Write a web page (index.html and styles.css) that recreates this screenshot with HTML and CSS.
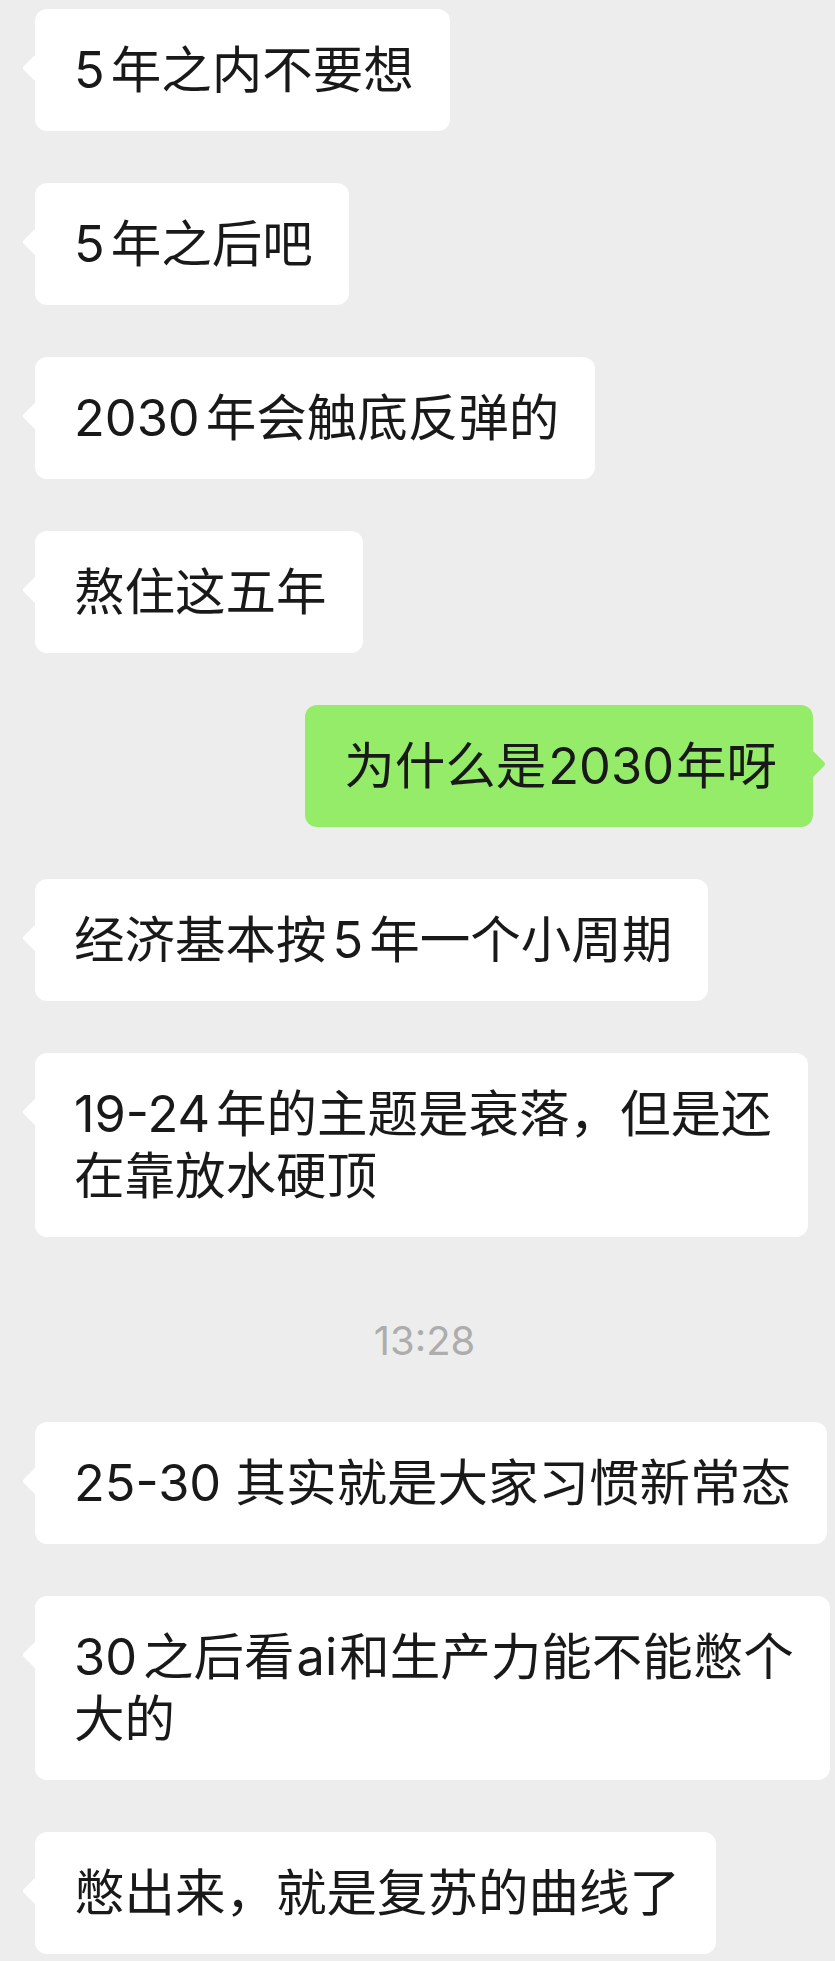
FILE: index.html
```html
<!DOCTYPE html>
<html lang="zh-CN">
<head>
    <meta charset="UTF-8">
    <meta name="viewport" content="width=device-width, initial-scale=1.0">
    <title>聊天记录</title>
    <link rel="stylesheet" href="styles.css">
</head>
<body>
    <div class="chat">
        <div class="msg msg-in"><div class="bubble"><span class="en lead">5</span>年之内不要想</div></div>
        <div class="msg msg-in"><div class="bubble"><span class="en lead">5</span>年之后吧</div></div>
        <div class="msg msg-in"><div class="bubble"><span class="en lead">2030</span>年会触底反弹的</div></div>
        <div class="msg msg-in"><div class="bubble">熬住这五年</div></div>
        <div class="msg msg-out"><div class="bubble">为什么是<span class="en tight">2030</span>年呀</div></div>
        <div class="msg msg-in"><div class="bubble">经济基本按<span class="en">5</span>年一个小周期</div></div>
        <div class="msg msg-in"><div class="bubble"><span class="en lead">19-24</span>年的主题是衰落，但是还<br>在靠放水硬顶</div></div>

        <div class="time">13:28</div>

        <div class="msg msg-in"><div class="bubble">25-30 其实就是大家习惯新常态</div></div>
        <div class="msg msg-in"><div class="bubble"><span class="en lead">30</span>之后看<span class="en tight">ai</span>和生产力能不能憋个<br>大的</div></div>
        <div class="msg msg-in"><div class="bubble">憋出来，就是复苏的曲线了</div></div>
    </div>
</body>
</html>
```

FILE: styles.css
```css
body {
    margin: 0;
    background-color: #ededed;
    font-family: Inter, "Noto Sans CJK SC", sans-serif;
    color: #191919;
}
.chat {
    display: flex;
    flex-direction: column;
    gap: 52px;
    padding-top: 9px;
}
.msg-in {
    align-self: flex-start;
    margin-left: 35px;
}
.msg-out {
    align-self: flex-end;
    margin-right: 22px;
}
.bubble {
    position: relative;
    background: #ffffff;
    border-radius: 12px;
    padding: 30px 36px 30px 39px;
    font-size: 50.5px;
    line-height: 62px;
    white-space: nowrap;
}
.msg-out .bubble {
    background: #95ec69;
}
/* latin text between chinese gets a little air */
.en {
    margin: 0 6px;
}
.en.tight {
    margin: 0 2px;
}
.en.lead {
    margin-left: 0;
}
/* little arrow next to the bubble */
.bubble::before {
    content: "";
    position: absolute;
    top: 49px;
    left: -9px;
    width: 20px;
    height: 20px;
    background: inherit;
    border-radius: 3px;
    transform: rotate(45deg);
}
.msg-out .bubble::before {
    left: auto;
    right: -9px;
}
.time {
    text-align: center;
    padding: 30px 0 7px 14px;
    font-size: 40px;
    line-height: 44px;
    color: #adadad;
}
```
